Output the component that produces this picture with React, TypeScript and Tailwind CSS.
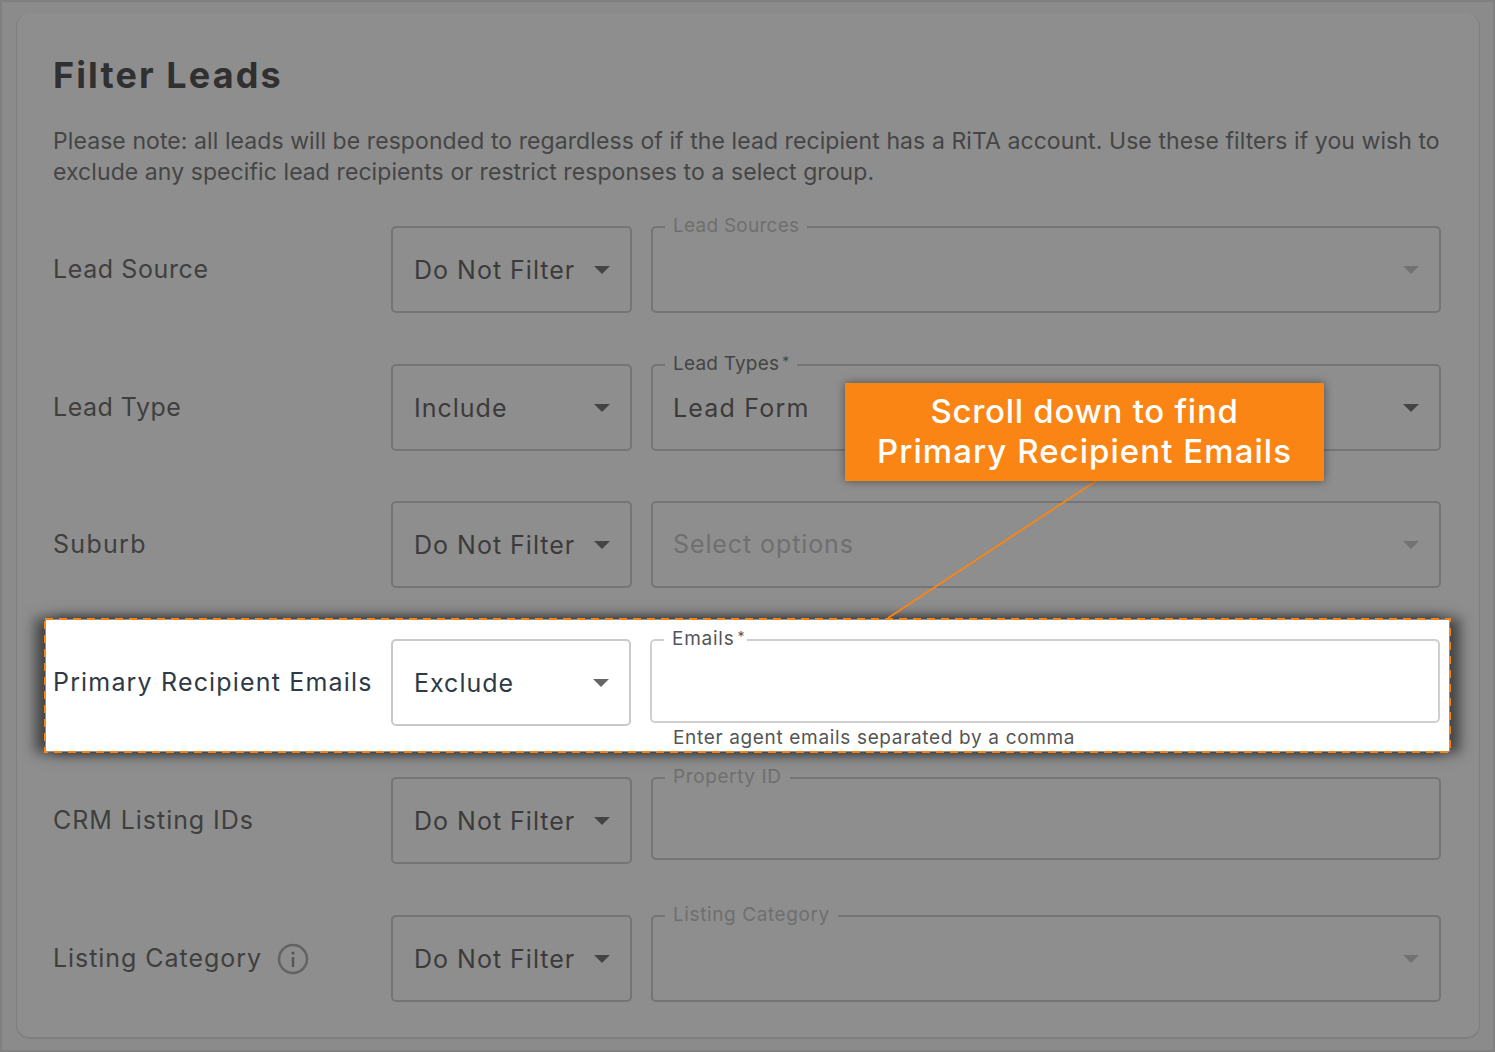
const Caret = ({ cls }: { cls: string }) => (
  <svg width="16" height="8" viewBox="0 0 16 8" className={cls}><path d="M0 0h16L8 8z" fill="currentColor" /></svg>
);

const SelectBox = ({ value, light }: { value: string; light?: boolean }) => (
  <div className={`flex h-[87px] items-center justify-between rounded-[5px] border-2 pl-[21px] pr-[20px] ${light ? "w-[240px] border-[#c9c9c9] text-[#2f3a45]" : "w-[241px] border-[#757575] text-[#3b3b3b]"}`}>
    <span className="whitespace-nowrap pt-[2px] text-[25px] tracking-[1px]">{value}</span>
    <Caret cls={light ? "text-[#666]" : "text-[#444]"} />
  </div>
);

const Star = () => <span className="relative -top-[3px] ml-[3px] text-[14px]">*</span>;

const Field = ({ label, star, value, placeholder, active, lt = "tracking-[0.4px]", h = "h-[87px]", caret = true }: { label?: string; star?: boolean; value?: string; placeholder?: string; active?: boolean; lt?: string; h?: string; caret?: boolean }) => (
  <div className={`relative flex w-[790px] items-center justify-between rounded-[5px] border-2 border-[#757575] pl-[20px] pr-[20px] ${h}`}>
    {label && <span className={`absolute left-[12px] top-[-14px] whitespace-nowrap bg-[#8e8e8e] px-[8px] text-[19px] leading-[24px] ${lt} ${active ? "text-[#454545]" : "text-[#6f6f6f]"}`}>{label}{star && <Star />}</span>}
    {value && <span className="pt-[2px] text-[25px] tracking-[1.2px] text-[#3b3b3b]">{value}</span>}
    {placeholder && <span className="text-[25px] tracking-[0.9px] text-[#6f6f6f]">{placeholder}</span>}
    {!value && !placeholder && <span />}
    {caret && <Caret cls={active ? "text-[#444]" : "text-[#727272]"} />}
  </div>
);

const Row = ({ label, select, mt, track, children }: { label: React.ReactNode; select: string; mt: string; track: string; children: React.ReactNode }) => (
  <div className={`flex items-start ${mt}`}>
    <div className={`flex h-[87px] w-[338px] shrink-0 items-center text-[25px] text-[#3f3f3f] ${track}`}>{label}</div>
    <SelectBox value={select} />
    <div className="ml-[19px]">{children}</div>
  </div>
);

export default function App() {
  return (
    <div className="relative h-[1052px] w-[1495px] overflow-hidden border-2 border-[#808080] bg-[#8b8b8b] font-['Inter',sans-serif]">
      <div className="ml-[14px] mt-[11px] h-[1026px] w-[1464px] rounded-[14px] border-b-2 border-l border-r border-[#7f7f7f] bg-[#8e8e8e] pl-[36px] pt-[38px]">
        <h1 className="text-[36px] font-bold leading-[48px] tracking-[2.1px] text-[#303030]">Filter Leads</h1>
        <p className="mt-[27px] w-[1400px] whitespace-nowrap text-[23px] leading-[31px] tracking-[0.08px] text-[#454545]">
          Please note: all leads will be responded to regardless of if the lead recipient has a RiTA account. Use these filters if you wish to
          <br />
          exclude any specific lead recipients or restrict responses to a select group.
        </p>
        <Row label="Lead Source" select="Do Not Filter" mt="mt-[38px]" track="tracking-[0.6px]">
          <Field label="Lead Sources" lt="tracking-[0.25px]" />
        </Row>
        <Row label="Lead Type" select="Include" mt="mt-[51px]" track="tracking-[0.5px]">
          <Field label="Lead Types" star value="Lead Form" active lt="tracking-[0.2px]" />
        </Row>
        <Row label="Suburb" select="Do Not Filter" mt="mt-[50px]" track="tracking-[1.3px]">
          <Field placeholder="Select options" />
        </Row>

        <div className="relative z-10 -ml-[9px] mt-[30px] h-[135px] w-[1407px] border-2 border-transparent bg-white bg-clip-padding pl-[7px] pt-[19px] shadow-[-9px_0_12px_rgba(0,0,0,0.5),9px_0_12px_rgba(0,0,0,0.5)]">
          <svg className="absolute -left-[2px] -top-[2px]" width="1407" height="135"><rect x="1" y="1" width="1405" height="133" fill="none" stroke="#fb8514" strokeWidth="2" strokeDasharray="8 6" /></svg>
          <div className="flex items-start">
            <div className="flex h-[87px] w-[338px] shrink-0 items-center whitespace-nowrap text-[25px] tracking-[1.17px] text-[#2f3a45]">Primary Recipient Emails</div>
            <SelectBox value="Exclude" light />
            <div className="ml-[19px]">
              <div className="relative h-[84px] w-[790px] rounded-[5px] border-2 border-[#cfcfcf]">
                <span className="absolute left-[12px] top-[-14px] bg-white pl-[8px] pr-[2px] text-[19px] leading-[24px] tracking-[0.75px] text-[#555]">Emails<Star /></span>
              </div>
              <div className="ml-[23px] mt-[3px] text-[19px] leading-[24px] tracking-[0.66px] text-[#555]">Enter agent emails separated by a comma</div>
            </div>
          </div>
        </div>

        <Row label="CRM Listing IDs" select="Do Not Filter" mt="mt-[24px]" track="tracking-[0.95px]">
          <Field label="Property ID" h="h-[83px]" caret={false} lt="tracking-[0.6px]" />
        </Row>
        <Row label={<>Listing Category
          <svg width="32" height="32" viewBox="0 0 32 32" className="ml-[15px]"><circle cx="16" cy="16" r="14" fill="none" stroke="#636363" strokeWidth="2.5" /><circle cx="16" cy="10" r="1.6" fill="#555" /><rect x="14.8" y="14" width="2.4" height="10" fill="#555" /></svg></>} select="Do Not Filter" mt="mt-[51px]" track="tracking-[0.95px]">
          <Field label="Listing Category" lt="tracking-[0.6px]" />
        </Row>
      </div>

      <svg className="absolute -left-[2px] -top-[2px] z-20" width="1495" height="1052"><line x1="1096" y1="481" x2="888" y2="618" stroke="#fb8514" strokeWidth="1.8" /></svg>
      <div className="absolute left-[843px] top-[381px] z-30 flex h-[98px] w-[479px] flex-col items-center justify-center rounded-[1px] bg-[#fb8514] pb-[2px] text-center text-[33px] font-medium leading-[40px] text-white shadow-[0_0_10px_rgba(0,0,0,0.45)]">
        <span className="tracking-[0.72px]">Scroll down to find</span>
        <span className="tracking-[1.05px]">Primary Recipient Emails</span>
      </div>
    </div>
  );
}
